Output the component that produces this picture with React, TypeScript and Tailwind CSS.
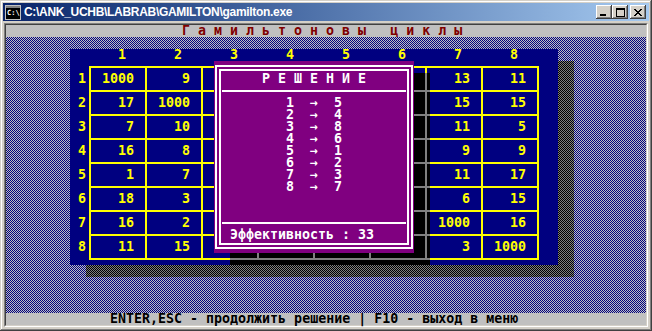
const MONO = "font-['DejaVu_Sans_Mono',monospace] font-bold text-[13.3px] leading-[12px] whitespace-pre";

const DITHER =
  'bg-[#000080] bg-[image:repeating-conic-gradient(#000080_0%_25%,#c0c0c0_0%_50%)] bg-[length:2px_2px]';
const SHADE =
  'bg-[#000000] bg-[image:repeating-conic-gradient(#000000_0%_25%,#808080_0%_50%)] bg-[length:2px_2px]';

const matrix = [
  ['1000', '9', '', '', '', '', '13', '11'],
  ['17', '1000', '', '', '', '', '15', '15'],
  ['7', '10', '', '', '', '', '11', '5'],
  ['16', '8', '', '', '', '', '9', '9'],
  ['1', '7', '', '', '', '', '11', '17'],
  ['18', '3', '', '', '', '', '6', '15'],
  ['16', '2', '', '', '', '', '1000', '16'],
  ['11', '15', '', '', '', '', '3', '1000'],
];

const cycle = [
  [1, 5],
  [2, 4],
  [3, 8],
  [4, 6],
  [5, 1],
  [6, 2],
  [7, 3],
  [8, 7],
];

function CaptionButton({ children, className = '' }: { children: React.ReactNode; className?: string }) {
  return (
    <div
      className={`w-[16px] h-[14px] bg-[#d4d0c8] flex items-center justify-center shadow-[inset_-1px_-1px_#404040,inset_1px_1px_#ffffff,inset_-2px_-2px_#808080,inset_2px_2px_#d4d0c8] ${className}`}
    >
      {children}
    </div>
  );
}

function TitleBar() {
  return (
    <div className="h-[18px] flex items-center bg-linear-to-r from-[#0a246a] to-[#a6caf0]">
      {/* console icon */}
      <div className="ml-[2px] w-[16px] h-[15px] border border-[#c0c0c0] bg-black flex flex-col">
        <div className="h-[3px] bg-[#808080] border-b border-black" />
        <span className="text-white text-[7px] leading-[9px] font-bold pl-[1px] font-['DejaVu_Sans_Mono',monospace]">
          C:\
        </span>
      </div>
      <span className="ml-[3px] text-white text-[12px] font-bold leading-none tracking-[-0.3px]">
        C:\ANK_UCHB\LABRAB\GAMILTON\gamilton.exe
      </span>
      <div className="ml-auto mr-[3px] flex">
        <CaptionButton>
          <svg width="8" height="7" viewBox="0 0 8 7" shapeRendering="crispEdges" className="mt-[1px]">
            <rect x="0" y="5" width="6" height="2" fill="#000" />
          </svg>
        </CaptionButton>
        <CaptionButton>
          <svg width="9" height="9" viewBox="0 0 9 9" shapeRendering="crispEdges">
            <rect x="0.5" y="0.5" width="8" height="8" fill="none" stroke="#000" />
            <rect x="0" y="1" width="9" height="1" fill="#000" />
          </svg>
        </CaptionButton>
        <CaptionButton className="ml-[2px]">
          <svg width="8" height="7" viewBox="0 0 8 7" shapeRendering="crispEdges">
            <path d="M0 0h2v1h1v1h2V1h1V0h2v1H7v1H6v1H5v1h1v1h1v1h1v1H6V6H5V5H3v1H2v1H0V6h1V5h1V4h1V3H2V2H1V1H0z" fill="#000" />
          </svg>
        </CaptionButton>
      </div>
    </div>
  );
}

function MatrixPanel() {
  return (
    <div className="relative ml-[64px] mt-[12px] w-[488px] h-[216px] bg-[#000080] text-[#ffff00]">
      <div className={`${MONO} h-[12px] pl-[21px] flex`}>
        {matrix.map((_, i) => (
          <div key={i} className="w-[56px] pl-[27px]">
            {i + 1}
          </div>
        ))}
      </div>
      <div className="mt-[5px] flex">
        <div className={`${MONO} ml-[8px] w-[11px] pt-[2px] flex flex-col`}>
          {matrix.map((_, i) => (
            <div key={i} className="h-[24px] pb-[2px] flex items-center">
              {i + 1}
            </div>
          ))}
        </div>
        <div className="w-[450px] border-l-2 border-t-2 border-[#ffff00] grid grid-cols-8">
          {matrix.flatMap((row, r) =>
            row.map((v, c) => (
              <div
                key={`${r}-${c}`}
                className={`${MONO} h-[24px] border-r-2 border-b-2 border-[#ffff00] flex items-center justify-end pr-[11px]`}
              >
                {v}
              </div>
            ))
          )}
        </div>
      </div>
    </div>
  );
}

function SolutionDialog() {
  return (
    <>
      {/* shadow with greyed grid below */}
      <div className="absolute left-[408px] top-[36px] w-[16px] h-[180px] bg-black">
        <div className="absolute left-[11px] top-0 w-[2px] h-full bg-[#808080]" />
        {[17, 41, 65, 89, 113, 137, 161].map((y) => (
          <div key={y} className="absolute left-0 w-full h-[2px] bg-[#808080]" style={{ top: y }} />
        ))}
      </div>
      <div className="absolute left-[224px] top-[216px] w-[200px] h-[12px] bg-black">
        <div className="absolute left-0 top-[5px] w-full h-[2px] bg-[#808080]" />
        {[27, 83, 139, 195].map((x) => (
          <div key={x} className="absolute top-0 w-[2px] h-[7px] bg-[#808080]" style={{ left: x }} />
        ))}
      </div>

      <div className="absolute left-[208px] top-[24px] w-[200px] h-[192px] bg-[#800080] text-white pt-[4px] pb-[4px] px-[1px] flex">
        <div className="flex-1 border-2 border-white p-[2px] flex">
          <div className="flex-1 border-2 border-white flex flex-col">
            <div className={`${MONO} mt-[2px] h-[12px] text-center`}>Р Е Ш Е Н И Е</div>
            <div className="mt-[5px] mx-[1px] h-[2px] bg-white" />
            <div className={`${MONO} mt-[5px] pl-[65px] h-[96px]`}>
              {cycle.map(([a, b]) => `${a}  →  ${b}`).join('\n')}
            </div>
            <div className="mt-[29px] mx-[1px] h-[2px] bg-white" />
            <div className={`${MONO} mt-[5px] pl-[9px] h-[12px]`}>Эффективность : 33</div>
          </div>
        </div>
      </div>
    </>
  );
}

export default function App() {
  return (
    <div className="w-[652px] h-[331px] bg-[#d4d0c8] p-[3px] flex flex-col shadow-[inset_-1px_-1px_#404040,inset_1px_1px_#d4d0c8,inset_-2px_-2px_#808080,inset_2px_2px_#ffffff] font-['Liberation_Sans',sans-serif]">
      <TitleBar />
      <div className="mt-[2px] mx-[1px] w-[644px] border border-[#808080] border-r-white border-b-white">
        <div className="border border-[#404040] border-r-[#d4d0c8] border-b-[#d4d0c8]">
          <div className="w-[640px] h-[300px] flex flex-col bg-black">
            <div className={`${MONO} h-[12px] bg-[#c0c0c0] text-[#800000] pl-[176px]`}>
              Г а м и л ь т о н о в ы   ц и к л ы
            </div>
            <div className={`relative flex-1 ${DITHER}`}>
              <div className={`absolute left-[80px] top-[24px] w-[488px] h-[216px] ${SHADE}`} />
              <MatrixPanel />
              <SolutionDialog />
            </div>
            <div className={`${MONO} h-[12px] bg-[#c0c0c0] text-black pl-[104px]`}>
              ENTER,ESC - продолжить решение | F10 - выход в меню
            </div>
          </div>
        </div>
      </div>
    </div>
  );
}
